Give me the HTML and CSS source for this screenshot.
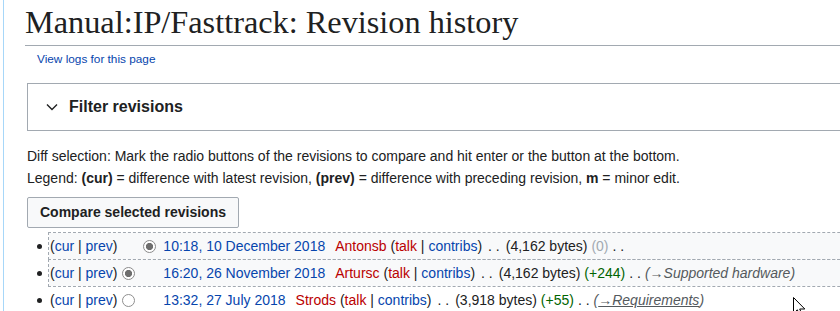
FILE: index.html
```html
<!DOCTYPE html>
<html lang="en">
<head>
  <meta charset="UTF-8">
  <title>Manual:IP/Fasttrack: Revision history</title>
  <link rel="stylesheet" href="styles.css">
</head>
<body>

  <div class="page">
    <div class="content">
      <h1 class="title">Manual:IP/Fasttrack: Revision history</h1>
      <div class="sub"><a href="#">View logs for this page</a></div>

      <div class="filter">
        <svg class="chevron" width="12" height="8" viewBox="0 0 12 8">
          <polyline points="1,1.5 6,6.5 11,1.5" fill="none" stroke="#202122" stroke-width="1.4"/>
        </svg>
        <span>Filter revisions</span>
      </div>

      <p class="intro">
        Diff selection: Mark the radio buttons of the revisions to compare and hit enter or the button at the bottom.<br>
        Legend: <b>(cur)</b> = difference with latest revision, <b>(prev)</b> = difference with preceding revision, <b>m</b> = minor edit.
      </p>

      <button class="compare">Compare selected revisions</button>

      <ul class="history">
        <li class="rev selected"><span class="histlinks">(<a href="#">cur</a> | <a href="#">prev</a>)</span><input type="radio" class="radio hide"><input type="radio" class="radio" checked> <a class="date" href="#">10:18, 10 December 2018</a><span class="user"><a class="new" href="#">Antonsb</a> (<a class="new" href="#">talk</a> | <a href="#">contribs</a>)</span><span class="sep">. .</span><span class="size">(4,162 bytes)</span> <span class="null">(0)</span><span class="sep end">. .</span></li>
        <li class="rev selected"><span class="histlinks">(<a href="#">cur</a> | <a href="#">prev</a>)</span><input type="radio" class="radio" checked><input type="radio" class="radio hide"> <a class="date" href="#">16:20, 26 November 2018</a><span class="user"><a class="new" href="#">Artursc</a> (<a class="new" href="#">talk</a> | <a href="#">contribs</a>)</span><span class="sep">. .</span><span class="size">(4,162 bytes)</span> <span class="pos">(+244)</span><span class="sep end">. .</span><span class="comment">(<a href="#">→</a>Supported hardware)</span></li>
        <li class="rev"><span class="histlinks">(<a href="#">cur</a> | <a href="#">prev</a>)</span><input type="radio" class="radio"><input type="radio" class="radio hide"> <a class="date" href="#">13:32, 27 July 2018</a><span class="user"><a class="new" href="#">Strods</a> (<a class="new" href="#">talk</a> | <a href="#">contribs</a>)</span><span class="sep">. .</span><span class="size">(3,918 bytes)</span> <span class="pos">(+55)</span><span class="sep end">. .</span><span class="comment hover">(<a href="#">→Requirements</a>)</span></li>
      </ul>
    </div>
  </div>

  <svg class="cursor" width="13" height="20" viewBox="0 0 13 20">
    <path d="M0.5,0.5 L0.5,16.5 L4.3,12.8 L7,18.8 L9.3,17.8 L6.7,12 L11.8,12 Z" fill="#fff" stroke="#000" stroke-width="1"/>
  </svg>

</body>
</html>
```

FILE: styles.css
```css
body {
  margin: 0;
  padding: 0;
  background: #fff;
  color: #202122;
  font-family: "Liberation Sans", Arial, sans-serif;
  font-size: 14px;
  overflow: hidden;
  position: relative;
  height: 311px;
}

a {
  color: #0645ad;
  text-decoration: none;
}

.page {
  margin-left: 3px;
  border-left: 1px solid #a7d7f9;
  width: 1100px;
  min-height: 311px;
}

.content {
  padding-left: 23px;
}

.title {
  margin: 0 0 0 -2px;
  padding: 4px 0 4px 0;
  font-family: "Liberation Serif", "Times New Roman", serif;
  font-weight: normal;
  font-size: 32.3px;
  line-height: 37px;
  border-bottom: 1px solid #a2a9b1;
}

.sub {
  margin: 4px 0 0 10px;
  font-size: 11.8px;
  line-height: 18px;
}

.filter {
  margin-top: 15px;
  border: 1px solid #a2a9b1;
  padding: 12px 0 12px 18px;
  display: flex;
  align-items: center;
  gap: 11px;
  font-weight: bold;
  font-size: 16px;
  line-height: 22px;
}

.chevron {
  display: block;
}

.intro {
  margin: 14px 0 0 0;
  line-height: 22px;
}

.compare {
  margin-top: 8px;
  display: block;
  background: #f8f9fa;
  border: 1px solid #a2a9b1;
  border-radius: 2px;
  padding: 6px 12px;
  font-family: inherit;
  font-size: 14px;
  font-weight: bold;
  line-height: 17px;
  color: #202122;
}

.history {
  list-style: none;
  margin: 5px 0 0 0;
  padding: 0;
}

.rev {
  position: relative;
  margin: 0 0 1px 22px;
  padding-left: 1px;
  line-height: 26px;
  white-space: nowrap;
}

.rev::before {
  content: "";
  position: absolute;
  left: -12px;
  top: 11px;
  width: 5px;
  height: 5px;
  border-radius: 50%;
  background: #202122;
}

.rev.selected {
  background: #f8f9fa;
  outline: 1px dashed #a2a9b1;
}

.radio {
  appearance: none;
  -webkit-appearance: none;
  width: 13px;
  height: 13px;
  margin: 0 3px 0 5px;
  border: 1px solid #8f8f8f;
  border-radius: 50%;
  background: #fff;
  vertical-align: -2px;
  box-sizing: border-box;
}

.radio:checked {
  background: radial-gradient(circle, #6e6e6e 0 3.3px, #fff 3.9px);
  border-color: #8a8a8a;
}

.radio.hide {
  visibility: hidden;
}

.user {
  margin-left: 10px;
}

.new {
  color: #ba0000;
}

.sep {
  margin: 0 6px;
}

.sep.end {
  margin: 0 4px;
}

.null {
  color: #a2a9b1;
}

.pos {
  color: #006400;
}

.comment {
  color: #54595d;
  font-style: italic;
}

.comment a {
  color: #54595d;
}

.comment.hover a {
  text-decoration: underline;
}

.cursor {
  position: absolute;
  left: 793px;
  top: 297px;
}
```
